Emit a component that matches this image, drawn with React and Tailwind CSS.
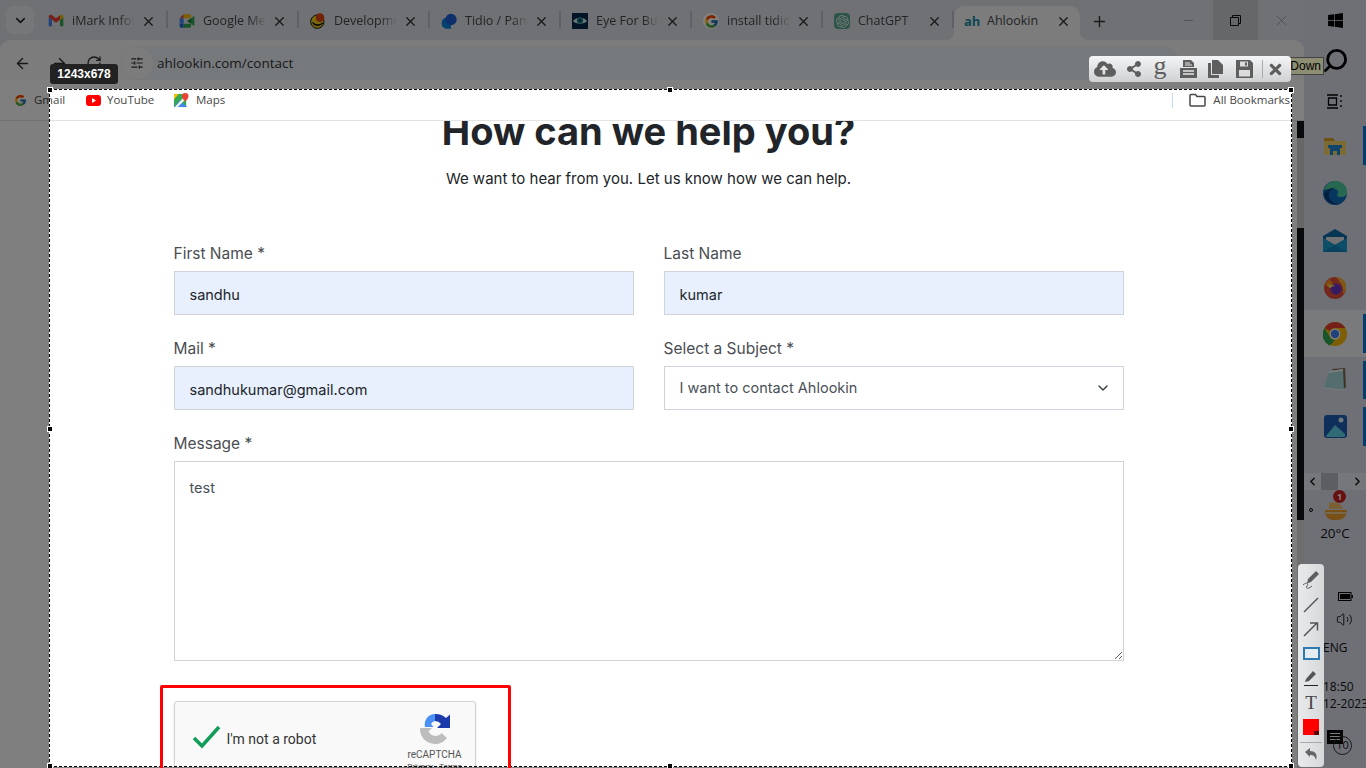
import React from 'react';
import { ArrowLeft, ArrowRight, ChevronDown, ChevronLeft, ChevronRight, Minus, Plus, RotateCw, SlidersHorizontal, Volume2, X, Search } from 'lucide-react';
import { FcGoogle } from 'react-icons/fc';
import { SiOpenai } from 'react-icons/si';
import { FaCloudUploadAlt, FaShareAlt, FaTimes, FaWindows } from 'react-icons/fa';

const GmailIcon = () => (
  <svg width="16" height="16" viewBox="0 0 24 24">
    <path d="M1 6v14h5V10z" fill="#4285f4" />
    <path d="M23 6v14h-5V10z" fill="#34a853" />
    <path d="M1 6c0-3 3-4 5-2.500l6 4.500 6-4.500v6.500l-6 4.500-6-4.500z" fill="#ea4335" />
    <path d="M18 3.500c2-1.500 5-.5 5 2.500v1l-5 3.500z" fill="#fbbc04" />
  </svg>
);

const MeetIcon = () => (
  <svg width="16" height="16" viewBox="0 0 24 24">
    <path d="M1 8l6-6v6z" fill="#ea4335" />
    <path d="M1 8h6v8H1z" fill="#4285f4" />
    <path d="M1 16h6v6H3a2 2 0 0 1-2-2z" fill="#1967d2" />
    <path d="M7 2h9a2 2 0 0 1 2 2v4H7z" fill="#fbbc04" />
    <path d="M7 16h11v4a2 2 0 0 1-2 2H7z" fill="#34a853" />
    <path d="M12 12l6-4v8z" fill="#188038" />
    <path d="M18 8l5-4v16l-5-4z" fill="#34a853" />
  </svg>
);

const DevIcon = () => (
  <svg width="18" height="18" viewBox="0 0 24 24">
    <circle cx="11" cy="13" r="10" fill="#f2d21c" stroke="#111" strokeWidth="1.500" />
    <path d="M4 14c3 5 10 6 15 1" fill="none" stroke="#111" strokeWidth="2.500" />
    <circle cx="15" cy="7" r="6.500" fill="#e2470f" />
  </svg>
);

const TidioIcon = () => (
  <svg width="17" height="17" viewBox="0 0 24 24">
    <path d="M1 14a8 8 0 0 1 8-8h6v17H9a8 8 0 0 1-8-8z" fill="#0a84e0" />
    <circle cx="15" cy="9" r="8.500" fill="#1d5fd6" />
  </svg>
);

const EyeIcon = () => (
  <svg width="16" height="16" viewBox="0 0 16 16">
    <rect width="16" height="16" fill="#05284d" />
    <path d="M1 8c3-4.500 11-4.500 14 0-3 3.500-11 3.500-14 0z" fill="#dff3f3" />
    <circle cx="8" cy="7.500" r="3.200" fill="#1c8c98" />
    <circle cx="8" cy="7.500" r="1.300" fill="#05284d" />
  </svg>
);

const GoogleTabIcon = () => (
  <div className="flex h-4 w-4 items-center justify-center rounded-full bg-white">
    <FcGoogle size={15} />
  </div>
);

const GptIcon = () => (
  <div className="flex h-4 w-4 items-center justify-center rounded-sm bg-[#5aa992]">
    <SiOpenai size={13} color="#e8f5f0" />
  </div>
);

const YoutubeIcon = () => (
  <svg width="15" height="11" viewBox="0 0 15 11">
    <rect width="15" height="11" rx="3" fill="#f00" />
    <path d="M6 3l4 2.500-4 2.500z" fill="#fff" />
  </svg>
);

const MapsIcon = () => (
  <svg width="15" height="15" viewBox="0 0 16 16">
    <path d="M0 1h13v14H0z" fill="#34a853" />
    <path d="M0 15l6-7 8 7z" fill="#4285f4" />
    <path d="M0 1h5L0 7z" fill="#fbbc04" />
    <path d="M1 15L12 3l2 2L4 15z" fill="#f7f7f7" />
    <path d="M12 0a3.500 3.500 0 0 1 3.500 3.500C15.500 6 12 9 12 9S8.500 6 8.500 3.500A3.500 3.500 0 0 1 12 0z" fill="#ea4335" />
  </svg>
);

const FolderIcon = () => (
  <svg width="17" height="14" viewBox="0 0 17 14" fill="none" stroke="#474747" strokeWidth="1.500">
    <path d="M1 2.500a1 1 0 0 1 1-1h4.500l1.500 2h7a1 1 0 0 1 1 1v7.500a1 1 0 0 1-1 1H2a1 1 0 0 1-1-1z" />
  </svg>
);

const PrintIcon = () => (
  <svg width="17" height="18" viewBox="0 0 17 18" className="ml-[13px]">
    <path d="M3 0h8l3 3v4H3z" fill="#5e5e5e" />
    <path d="M5 3h5M5 5h7" stroke="#e6e6e6" />
    <path d="M0 8h17v10H0z" fill="#5e5e5e" />
    <path d="M3 11h11M3 14h11" stroke="#e6e6e6" strokeWidth="1.500" />
  </svg>
);

const CopyIcon = () => (
  <svg width="15" height="18" viewBox="0 0 15 18" className="ml-[11px]">
    <path d="M4 0h6l5 5v9H4z" fill="#5e5e5e" />
    <path d="M0 3h3v12h8v3H0z" fill="#5e5e5e" />
  </svg>
);

const SaveIcon = () => (
  <svg width="17" height="18" viewBox="0 0 17 18" className="ml-[13px]">
    <path d="M0 0h14l3 3v15H0z" fill="#5e5e5e" />
    <path d="M4 1.500h8v5H4zM3 10h11v6.500H3z" fill="#dcdcdc" />
    <path d="M9 2.500h2v3H9z" fill="#5e5e5e" />
  </svg>
);

const tabs = [
  { icon: GmailIcon, title: 'iMark Infotech' },
  { icon: MeetIcon, title: 'Google Meet' },
  { icon: DevIcon, title: 'Development' },
  { icon: TidioIcon, title: 'Tidio / Panel' },
  { icon: EyeIcon, title: 'Eye For Business' },
  { icon: GoogleTabIcon, title: 'install tidio' },
  { icon: GptIcon, title: 'ChatGPT' },
];

const Tab = ({ icon: Icon, title }) => (
  <div className="relative flex h-[34px] w-[131px] shrink-0 items-center pb-1 pl-[11px]">
    <div className="flex w-[16px] items-center justify-center">
      <Icon />
    </div>
    <div className="ml-[8px] w-[63px] overflow-hidden whitespace-nowrap text-[12.500px] text-[#47494b] [mask-image:linear-gradient(to_right,black_75%,transparent)]">
      {title}
    </div>
    <X size={15} strokeWidth={2} className="ml-[6px] text-[#2d2e30]" />
    <div className="absolute right-0 top-[5px] h-[17px] w-[2px] bg-[#bfc3c8]" />
  </div>
);

const ActiveTab = () => (
  <div className="relative flex h-[34px] w-[126px] shrink-0 items-center rounded-t-[10px] bg-[#f8f9fa] pb-1 pl-[10px]">
    <span className="w-[16px] text-[13px] leading-none font-bold text-[#1b8ea3]">ah</span>
    <span className="ml-[7px] w-[69px] text-[12.500px] text-[#47494b]">Ahlookin</span>
    <X size={15} strokeWidth={2} className="text-[#2d2e30]" />
    <div className="absolute -left-2 bottom-0 h-2 w-2 bg-[radial-gradient(circle_at_0_0,transparent_8px,#f8f9fa_8px)]" />
    <div className="absolute -right-2 bottom-0 h-2 w-2 bg-[radial-gradient(circle_at_100%_0,transparent_8px,#f8f9fa_8px)]" />
  </div>
);

const Field = ({ label, children }) => (
  <div>
    <label className="mb-[4px] block text-[15.500px] leading-[26px] text-[#4a4d52]">{label}</label>
    {children}
  </div>
);

const TextInput = ({ value }) => (
  <input
    readOnly
    value={value}
    className="block h-[44px] w-full border border-[#d0d3da] bg-[#e8f0fe] px-[15px] pt-[2px] text-[14.500px] text-[#212529] outline-none"
  />
);

const RecaptchaLogo = () => (
  <svg width="32" height="32" viewBox="0 0 32 32">
    <path d="M6 14A10.500 10.500 0 0 1 16 1v7a5.500 5.500 0 0 0-4 3l2.500 3z" fill="#4a90f5" />
    <path d="M16 1a15 15 0 0 1 11 4l4-3.500V15H18l4-4a8 8 0 0 0-6-3z" fill="#1c3aa9" />
    <path d="M1 16h8a7.500 7.500 0 0 0 7 7c3 0 5-1 6.500-3l5.500 5a15 15 0 0 1-12 6A15 15 0 0 1 1 16z" fill="#bdbdbd" />
    <path d="M1 15h12l-4 4 3 3-7 5z" fill="#bdbdbd" />
  </svg>
);

const Chrome = () => (
  <svg width="24" height="24" viewBox="0 0 24 24">
    <circle cx="12" cy="12" r="12" fill="#fbbc04" />
    <path d="M12 0a12 12 0 0 1 10.400 6H12a6 6 0 0 0-5.200 3L1.600 6A12 12 0 0 1 12 0z" fill="#ea4335" />
    <path d="M1.600 6l5.200 9a6 6 0 0 0 5.200 3l-5.200 5.500A12 12 0 0 1 1.600 6z" fill="#34a853" />
    <circle cx="12" cy="12" r="5.500" fill="#fff" />
    <circle cx="12" cy="12" r="4.200" fill="#4285f4" />
  </svg>
);

const Edge = () => (
  <svg width="24" height="24" viewBox="0 0 24 24">
    <circle cx="12" cy="12" r="12" fill="#0f6cbd" />
    <path d="M1 9C3 2 9 0 13 0c6 0 11 5 11 11 0 3-2 5-6 5-3 0-4-1-4-2 2-1 2-6-3-6-4 0-8 0-10 1z" fill="#4fd0a0" />
    <path d="M13 7c-5 0-8 4-7 9 1 4 5 7 10 7-6 2-14-2-15-10 2-3 6-7 12-6z" fill="#0b3f82" />
  </svg>
);

const Firefox = () => (
  <svg width="24" height="24" viewBox="0 0 24 24">
    <circle cx="12" cy="13" r="11" fill="#e8513a" />
    <path d="M12 2c5 0 8 2 10 5 2 4 1 9-2 12 1-6-1-10-4-13 0-2-2-3-4-4z" fill="#ffb52e" />
    <path d="M2 10c1-3 3-5 5-6 0 2 1 3 3 3l-4 4z" fill="#ff9a1f" />
    <circle cx="13" cy="14" r="5.500" fill="#6d37c9" />
    <path d="M4 10c3-1 6-1 8 1-3 0-4 1-4 2-2 0-3-1-4-3z" fill="#ffcf4a" />
  </svg>
);

const Mail = () => (
  <svg width="24" height="23" viewBox="0 0 24 23">
    <path d="M12 0l12 7v16H0V7z" fill="#0f6aa8" />
    <path d="M3 8h18v3l-9 5-9-5z" fill="#e4e4e4" />
    <path d="M0 9l12 7 12-7v14H0z" fill="#1a9cd0" />
    <path d="M0 23l12-7 12 7z" fill="#0e86c0" />
  </svg>
);

const Explorer = () => (
  <svg width="22" height="18" viewBox="0 0 22 18">
    <path d="M0 2a1 1 0 0 1 1-1h8l2 3H0z" fill="#e0a526" />
    <path d="M0 4h22v14H0z" fill="#f8d66a" />
    <path d="M4 8h14v3h-2v7h-3v-4H9v4H6v-7H4z" fill="#1f88d8" />
  </svg>
);

const Notepad = () => (
  <svg width="24" height="24" viewBox="0 0 24 24">
    <path d="M9 1l13-1 1 19-4 3z" fill="#7a6a50" />
    <path d="M6 3l14-2 1 21-20-2z" fill="#a9dcdf" />
    <path d="M6 3l14-2v2L5 5z" fill="#f4f4f4" />
    <path d="M1 20l20 2" stroke="#f4f4f4" />
  </svg>
);

const Photos = () => (
  <svg width="23" height="23" viewBox="0 0 23 23">
    <rect width="23" height="23" rx="3" fill="#1c5fb4" />
    <path d="M2 21l9-11 10 9v2a1 1 0 0 1-1 1H3z" fill="#62d3e8" />
    <circle cx="17" cy="5" r="2.500" fill="#dff2fb" />
  </svg>
);

const pinned = [
  { icon: Explorer, h: 'h-[47px]', bar: true },
  { icon: Edge, h: 'h-[48px]' },
  { icon: Mail, h: 'h-[46px]' },
  { icon: Firefox, h: 'h-[47px]' },
  { icon: Chrome, h: 'h-[47px]', bar: true, active: true },
  { icon: Notepad, h: 'h-[46px]', bar: true },
  { icon: Photos, h: 'h-[47px]', bar: true },
];

const Taskbar = () => (
  <div className="flex h-full w-[62px] shrink-0 flex-col bg-[#dde1ec] text-[#111]">
    <div className="flex h-10 items-center justify-center">
      <FaWindows size={17} color="#000" />
    </div>
    <div className="flex h-10 items-center justify-center">
      <Search size={27} strokeWidth={2.500} color="#000" className="-scale-x-100" />
    </div>
    <div className="flex h-[42px] items-center justify-center">
      <svg width="16" height="15" viewBox="0 0 16 15" fill="none" stroke="#000" strokeWidth="1.300">
        <path d="M0 1h11M0 14h11M1.500 4h8v7h-8zM14 1v2M14 6v2M14 11v2" />
      </svg>
    </div>
    {pinned.map((item, i) => (
      <div key={i} className={`relative flex items-center justify-center ${item.h} ${item.active ? 'bg-[#f2f4f8]' : ''}`}>
        <item.icon />
        {item.bar && <div className="absolute right-0 top-[4px] bottom-[4px] w-[3px] bg-[#0a78d4]" />}
      </div>
    ))}
    <div className="mt-[23px] flex h-[17px] items-center bg-[#eceff5] pl-[2px] pr-[2px]">
      <ChevronLeft size={13} strokeWidth={3} color="#222" />
      <div className="ml-[2px] h-[17px] w-[17px] bg-[#b9bcc2]" />
      <ChevronRight size={13} strokeWidth={3} color="#222" className="ml-auto" />
    </div>
    <div className="relative mt-[8px] flex h-[24px] items-center pl-[5px]">
      <div className="h-[4px] w-[4px] rounded-full border border-black" />
      <svg width="24" height="20" viewBox="0 0 24 20" className="ml-[11px]">
        <path d="M1 10h22c0 6-4 10-10 10H9c-5 0-8-4-8-10z" fill="#f0a030" />
        <path d="M5 3c6-2 12 0 14 6H5z" fill="#f7c06a" />
        <path d="M2 13h20" stroke="#fff" />
      </svg>
      <div className="absolute left-[29px] top-[-8px] flex h-[13px] w-[13px] items-center justify-center rounded-full bg-[#d01f1f] text-[9px] font-bold text-white">1</div>
    </div>
    <div className="mt-[2px] text-center font-['Open_Sans'] text-[13.500px] leading-[18px]">20°C</div>
    <div className="mt-[42px] flex h-[24px] items-center justify-end pr-[13px]">
      <svg width="15" height="9" viewBox="0 0 15 9">
        <rect x=".5" y=".5" width="12.500" height="8" fill="none" stroke="#000" />
        <rect x="2" y="2" width="10" height="5" fill="#000" />
        <rect x="13.500" y="3" width="1.500" height="3" fill="#000" />
      </svg>
    </div>
    <div className="flex h-[23px] items-center justify-end pr-[13px]">
      <Volume2 size={17} strokeWidth={1.300} />
    </div>
    <div className="mt-[9px] pl-[19px] font-['Open_Sans'] text-[12px] leading-[16px]">ENG</div>
    <div className="mt-[22px] pl-[19px] font-['Open_Sans'] text-[12px] leading-[17px] whitespace-nowrap">18:50</div>
    <div className="pl-[19px] font-['Open_Sans'] text-[12px] leading-[17px] whitespace-nowrap">12-2023</div>
    <div className="relative mt-[18px] h-[20px] pl-[23px]">
      <div className="h-[14px] w-[16px] bg-[#0a0a0a] px-[3px] pt-[3px]">
        <div className="mb-[2px] h-px bg-white" />
        <div className="mb-[2px] h-px bg-white" />
        <div className="h-px bg-white" />
      </div>
      <div className="absolute left-[29px] top-[6px] flex h-[19px] w-[19px] items-center justify-center rounded-full border border-[#333] text-[11px]">10</div>
    </div>
  </div>
);

const Handle = ({ className }) => (
  <div className={`absolute h-[6px] w-[6px] border border-white bg-black ${className}`} />
);

const ToolSlot = ({ children }) => (
  <div className="flex h-[24.500px] w-full shrink-0 items-center justify-center">{children}</div>
);

const CaptureOverlay = () => (
  <>
    {/* selection rectangle dims everything round it */}
    <div className="pointer-events-none absolute left-[49px] top-[89px] h-[678px] w-[1243px] border border-dashed border-black shadow-[0_0_0_1400px_rgba(0,0,0,0.5)]">
      <Handle className="-left-[3px] -top-[3px]" />
      <Handle className="left-[617px] -top-[3px]" />
      <Handle className="-right-[3px] -top-[3px]" />
      <Handle className="-left-[3px] top-[336px]" />
      <Handle className="-right-[3px] top-[336px]" />
      <Handle className="-left-[3px] -bottom-[3px]" />
      <Handle className="left-[617px] -bottom-[3px]" />
      <Handle className="-right-[3px] -bottom-[3px]" />
    </div>

    {/* size label */}
    <div className="absolute left-[50px] top-[64px] flex h-[20px] w-[68px] items-center justify-center rounded-[3px] bg-[#222] font-['Liberation_Sans'] text-[12px] font-bold text-white">
      1243x678
    </div>

    {/* red annotation box */}
    <div className="absolute left-[160px] top-[685px] h-[100px] w-[351px] rounded-[2px] border-[3px] border-[#ff0000]" />

    {/* tooltip */}
    <div className="absolute left-[1284px] top-[57px] flex h-[18px] w-[40px] items-center justify-end border border-[#444] bg-[#8d8d72] pr-[2px] font-['Liberation_Sans'] text-[12px] text-black">
      Down
    </div>

    {/* top toolbar */}
    <div className="absolute left-[1089px] top-[56px] flex h-[26px] w-[202px] items-center rounded-[4px] bg-gradient-to-b from-[#f4f5f6] to-[#cfd1d3] pl-[5px] text-[#5e5e5e]">
      <FaCloudUploadAlt size={22} />
      <FaShareAlt size={16} className="ml-[10px]" />
      <span className="-mt-[7px] ml-[11px] w-[14px] text-center font-['Liberation_Serif'] text-[26px] leading-[24px]">g</span>
      <PrintIcon />
      <CopyIcon />
      <SaveIcon />
      <div className="ml-[9px] h-[18px] w-px bg-[#aaa]" />
      <FaTimes size={17} className="ml-[4px]" />
    </div>

    {/* side drawing tools */}
    <div className="absolute left-[1298px] top-[564px] flex h-[203px] w-[26px] flex-col items-center rounded-[4px] bg-gradient-to-r from-[#e8eaec] to-[#d6d8da] pt-[4px]">
      <ToolSlot>
        <svg width="17" height="20" viewBox="0 0 17 20" fill="none">
          <path d="M5 9l8-8 3 3-8 8-4 1.500z" fill="#5e5e5e" />
          <path d="M0 15c3-3 6-2 4 1s2 3 5 0" stroke="#5e5e5e" />
        </svg>
      </ToolSlot>
      <ToolSlot>
        <svg width="16" height="16" viewBox="0 0 16 16">
          <path d="M1 15L15 1" stroke="#555" strokeWidth="1.500" />
        </svg>
      </ToolSlot>
      <ToolSlot>
        <svg width="16" height="16" viewBox="0 0 16 16" fill="none">
          <path d="M1 15L14 2M7 2h7.500v7.500" stroke="#555" strokeWidth="1.500" />
        </svg>
      </ToolSlot>
      <ToolSlot>
        <div className="h-[13px] w-[17px] border-2 border-[#2f7ab0] bg-[#e6edf2]" />
      </ToolSlot>
      <ToolSlot>
        <svg width="16" height="18" viewBox="0 0 16 18">
          <path d="M3 10l7-8 3 3-7 7-4 1z" fill="#555" />
          <path d="M1 16.500h14" stroke="#222" />
        </svg>
      </ToolSlot>
      <ToolSlot>
        <span className="font-['Liberation_Serif'] text-[19px] leading-[20px] text-[#444]">T</span>
      </ToolSlot>
      <ToolSlot>
        <div className="relative h-[16px] w-[16px] bg-[#ff0000]">
          <div className="absolute bottom-0 right-0 h-[4px] w-[5px] bg-[#5a0000]" />
        </div>
      </ToolSlot>
      <div className="mt-[2px] h-px w-[22px] bg-[#aaa]" />
      <svg width="16" height="16" viewBox="0 0 16 16" className="mt-[3px]" fill="none">
        <path d="M2 6l5-4v3c5 0 8 3 6 9-1-4-3-5-6-5v2z" fill="#666" />
      </svg>
    </div>
  </>
);

const App = () => {
  return (
    <div className="relative flex h-[768px] w-[1366px] overflow-hidden bg-[#dde1ec] font-['Open_Sans',sans-serif]">
      <div className="flex h-full w-[1304px] shrink-0 flex-col">
        {/* Tab strip */}
        <div className="flex h-10 shrink-0 items-end bg-[#dee3e8]">
          <div className="mb-[6px] ml-[6px] mr-[3px] flex h-[28px] w-[28px] shrink-0 items-center justify-center rounded-lg bg-[#eceff3]">
            <ChevronDown size={15} strokeWidth={2.500} className="text-[#222]" />
          </div>
          {tabs.map((tab, index) => (
            <Tab key={index} icon={tab.icon} title={tab.title} />
          ))}
          <ActiveTab />
          <div className="flex h-[34px] w-[38px] shrink-0 items-center justify-center pb-1">
            <Plus size={17} strokeWidth={2} className="text-[#333]" />
          </div>
          <div className="flex h-10 w-[78px] shrink-0 items-center justify-end">
            <Minus size={15} strokeWidth={1} className="text-[#888]" />
          </div>
          <div className="ml-[17px] flex h-10 w-[45px] shrink-0 items-center justify-center bg-[#cbced2]">
            <svg width="11" height="11" viewBox="0 0 11 11" fill="none" stroke="#111">
              <path d="M.5 2.500h8v8h-8zM2.500 2.500V.5h8v8h-2" />
            </svg>
          </div>
          <div className="flex h-10 w-[46px] shrink-0 items-center justify-center">
            <X size={17} strokeWidth={1} className="text-[#888]" />
          </div>
        </div>

        {/* Address bar */}
        <div className="flex h-10 shrink-0 items-end rounded-t-[10px] bg-[#f8f8f8]">
          <div className="flex h-[34px] w-[120px] items-center pl-[14px]">
            <ArrowLeft size={17} strokeWidth={2} className="text-[#333]" />
            <ArrowRight size={17} strokeWidth={2} className="ml-[20px] text-[#333]" />
            <RotateCw size={16} strokeWidth={2} className="ml-[18px] text-[#333]" />
          </div>
          <div className="flex h-[34px] w-[1060px] items-center rounded-full bg-[#edf2f8]">
            <div className="ml-[1px] flex h-[32px] w-[32px] items-center justify-center rounded-full bg-[#f8f8fa]">
              <SlidersHorizontal size={14} strokeWidth={2} className="text-[#333]" />
            </div>
            <span className="ml-[4px] text-[13.500px] text-[#333]">ahlookin.com/contact</span>
          </div>
        </div>

        {/* Bookmarks */}
        <div className="flex h-[41px] shrink-0 items-start border-b border-[#e3e3e3] bg-white pt-[12px] text-[11.500px] leading-[16px] text-[#474747]">
          <div className="ml-[14px] flex w-[72px] items-center">
            <FcGoogle size={13} />
            <span className="ml-[7px]">Gmail</span>
          </div>
          <div className="flex w-[88px] items-center">
            <YoutubeIcon />
            <span className="ml-[6px]">YouTube</span>
          </div>
          <div className="flex items-center">
            <MapsIcon />
            <span className="ml-[7px]">Maps</span>
          </div>
          <div className="ml-auto mr-[14px] flex items-center">
            <div className="mr-[16px] h-[15px] w-px bg-[#c6dafc]" />
            <FolderIcon />
            <span className="ml-[7px]">All Bookmarks</span>
          </div>
        </div>

        {/* Page */}
        <div className="flex min-h-0 flex-1">
          <main className="min-w-0 flex-1 overflow-hidden bg-white font-['Inter',sans-serif]">
            <div className="mx-auto w-[950px]">
              <h1 className="-mt-[12px] text-center text-[38px] leading-[44px] font-bold text-[#212529]">How can we help you?</h1>
              <p className="mt-[14px] text-center text-[15px] leading-6 text-[#212529]">We want to hear from you. Let us know how we can help.</p>

              <form className="mt-[50px]">
                <div className="grid grid-cols-2 gap-x-[30px] gap-y-[21px]">
                  <Field label="First Name *"><TextInput value="sandhu" /></Field>
                  <Field label="Last Name"><TextInput value="kumar" /></Field>
                  <Field label="Mail *"><TextInput value="sandhukumar@gmail.com" /></Field>
                  <Field label="Select a Subject *">
                    <div className="flex h-[44px] items-center justify-between border border-[#d0d3da] bg-white pl-[15px] pr-[12px] text-[14.500px] text-[#495057]">
                      I want to contact Ahlookin
                      <ChevronDown size={16} strokeWidth={2} className="text-[#343a40]" />
                    </div>
                  </Field>
                  <div className="col-span-2">
                    <Field label="Message *">
                      <textarea
                        readOnly
                        value="test"
                        className="block h-[200px] w-full border border-[#d0d3da] bg-white px-[15px] py-[15px] text-[14.500px] text-[#495057] outline-none"
                      />
                    </Field>
                  </div>
                </div>

                <div className="mt-[40px] flex h-[80px] w-[302px] rounded-[3px] border border-[#d3d3d3] bg-[#f9f9f9] font-['Roboto',sans-serif] shadow-sm">
                  <svg width="30" height="24" viewBox="0 0 30 24" className="ml-[17px] mt-[23px]" fill="none">
                    <path d="M2 13l8 8L27 2" stroke="#0f9d58" strokeWidth="3.500" />
                  </svg>
                  <span className="ml-[5px] mt-[28px] text-[14px] leading-[18px] text-[#333]">I'm not a robot</span>
                  <div className="ml-auto mr-[12px] flex w-[56px] flex-col items-center pt-[11px]">
                    <RecaptchaLogo />
                    <span className="mt-[3px] whitespace-nowrap text-[10px] leading-[14px] text-[#555]">reCAPTCHA</span>
                    <span className="whitespace-nowrap text-[8px] leading-[10px] text-[#555]">Privacy - Terms</span>
                  </div>
                </div>
              </form>
            </div>
          </main>

          {/* Page scrollbar */}
          <div className="flex w-[7px] shrink-0 flex-col bg-[#dddddd]">
            <div className="h-[17px] bg-[#111518]" />
            <div className="h-[90px] bg-[#cfcfcf]" />
            <div className="h-[292px] bg-[#111518]" />
          </div>
        </div>
      </div>

      <Taskbar />
      <CaptureOverlay />
    </div>
  );
};

export default App;
